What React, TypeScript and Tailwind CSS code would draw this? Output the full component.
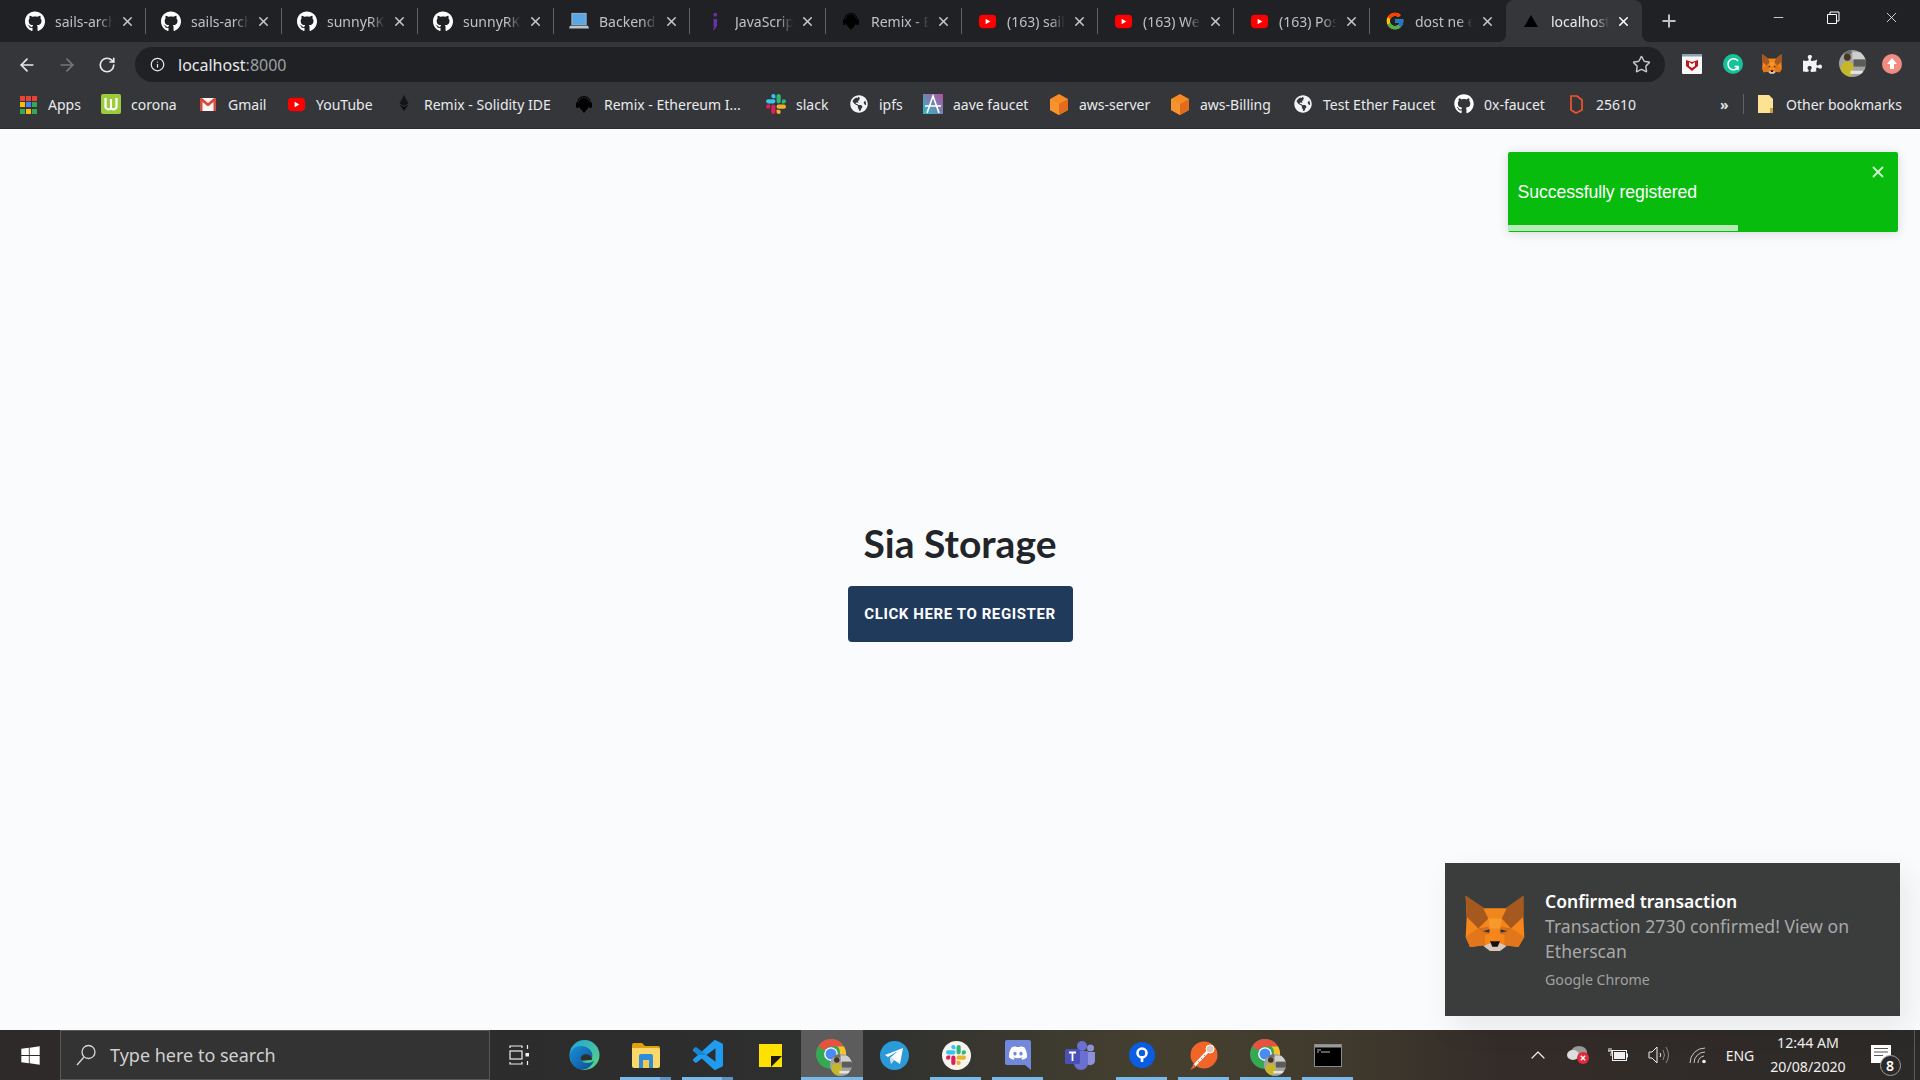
import React from "react";
import { FaGithub, FaGlobeAmericas, FaPuzzlePiece, FaWindows } from "react-icons/fa";
import { FcGoogle } from "react-icons/fc";
import { SiDiscord } from "react-icons/si";
import { ArrowLeft, ArrowRight, RotateCw, Info, Star, X, Plus, Minus, ChevronUp } from "lucide-react";

const Yt = ({ s = 19 }: { s?: number }) => (
  <svg width={s} height={s} viewBox="0 0 20 20"><rect x="1" y="3" width="18" height="14" rx="4" fill="#f00" /><path d="M8 7l5 3-5 3z" fill="#fff" /></svg>
);
const Gh = () => <FaGithub size={21} color="#fff" />;
const Headset = () => (
  <svg width="20" height="20" viewBox="0 0 20 20"><path d="M3 9a7 7 0 0 1 14 0v3h-1V9A6 6 0 0 0 4 9v3H3z" fill="#000" /><ellipse cx="10" cy="10" rx="5.5" ry="6.5" fill="#000" /><rect x="2" y="8" width="3" height="6" rx="1.5" fill="#000" /><rect x="15" y="8" width="3" height="6" rx="1.5" fill="#000" /><path d="M7.5 16h5l-2.5 3z" fill="#000" /></svg>
);
const Laptop = () => (
  <svg width="21" height="20" viewBox="0 0 21 20"><rect x="3" y="2" width="15" height="12" fill="#5aa7e6" stroke="#9db7cc" /><path d="M1 15h19l1 3H0z" fill="#b9c4cc" /></svg>
);
const JsIcon = () => (
  <svg width="20" height="20" viewBox="0 0 20 20"><rect x="8.5" y="2" width="3.5" height="3.5" rx="1" fill="#6b2fa8" /><path d="M8.5 8h3.5v7l-3 4h-1l1-4h-.5z" fill="#6b2fa8" /></svg>
);
const Triangle = () => (
  <svg width="20" height="20" viewBox="0 0 20 20"><path d="M10 4l7 12H3z" fill="#000" /></svg>
);

const tabs = [
  { icon: <Gh />, t: "sails-archive" },
  { icon: <Gh />, t: "sails-archive" },
  { icon: <Gh />, t: "sunnyRK/sia" },
  { icon: <Gh />, t: "sunnyRK/sia" },
  { icon: <Laptop />, t: "Backend dev" },
  { icon: <JsIcon />, t: "JavaScript" },
  { icon: <Headset />, t: "Remix - Ethereum" },
  { icon: <Yt />, t: "(163) sails" },
  { icon: <Yt />, t: "(163) Web" },
  { icon: <Yt />, t: "(163) Post" },
  { icon: <FcGoogle size={20} />, t: "dost ne ethereum" },
];

const Tab = ({ icon, t, active, last }: { icon: React.ReactNode; t: string; active?: boolean; last?: boolean }) => (
  <div className={active ? "relative w-[136px] h-[42px] flex items-center pl-[15px] bg-[#35363a] rounded-t-[8px]" : "relative w-[136px] h-[42px] flex items-center pl-[15px]"}>
    {active && <div className="absolute left-[-8px] bottom-0 w-[8px] h-[8px] bg-[radial-gradient(circle_at_0_0,transparent_8px,#35363a_8px)]" />}
    {active && <div className="absolute right-[-8px] bottom-0 w-[8px] h-[8px] bg-[radial-gradient(circle_at_100%_0,transparent_8px,#35363a_8px)]" />}
    <div className="w-[20px] h-[20px] flex items-center justify-center shrink-0">{icon}</div>
    <div className={active
      ? "ml-[10px] w-[58px] overflow-hidden whitespace-nowrap text-[14px] text-[#e8eaed] [mask-image:linear-gradient(to_right,#000_75%,transparent)]"
      : "ml-[10px] w-[58px] overflow-hidden whitespace-nowrap text-[14px] text-[#bdc1c6] [mask-image:linear-gradient(to_right,#000_75%,transparent)]"}>{t}</div>
    <X size={15} strokeWidth={2.5} className={active ? "ml-[7px] text-white shrink-0" : "ml-[7px] text-[#c4c7ca] shrink-0"} />
    <div className="flex-1" />
    <div className={last || active ? "w-px h-[26px]" : "w-px h-[26px] bg-[#5f6368]"} />
  </div>
);

const AppsIcon = () => {
  const c = ["#ea4335", "#ea4335", "#ea4335", "#fbbc04", "#4285f4", "#34a853", "#34a853", "#fbbc04", "#34a853"];
  return (
    <div className="grid grid-cols-3 gap-[1.5px] w-[17px] h-[17px]">
      {c.map((x, i) => (
        <svg key={i} width="5" height="5"><rect width="5" height="5" fill={x} /></svg>
      ))}
    </div>
  );
};
const Corona = () => (
  <svg width="20" height="20" viewBox="0 0 20 20"><rect width="20" height="20" rx="2" fill="#9ccc3c" /><path d="M4.5 4v9a3 3 0 0 0 5.5 1 3 3 0 0 0 5.5-1V4" fill="none" stroke="#fff" strokeWidth="2.2" /><path d="M10 5v9" stroke="#fff" strokeWidth="2" /></svg>
);
const Gmail = () => (
  <svg width="20" height="20" viewBox="0 0 20 20"><rect x="2" y="4" width="16" height="13" fill="#f5f5f5" /><path d="M2 4v13h2.5V8l5.5 4.5L15.5 8v9H18V4h-2l-6 5-6-5z" fill="#d54c3f" /></svg>
);
const Eth = () => (
  <svg width="20" height="20" viewBox="0 0 20 20"><path d="M10 1L5.500 9.500 10 12l4.500-2.500z" fill="#14151a" /><path d="M5.500 10.500L10 17l4.500-6.500L10 13z" fill="#0d0e12" /></svg>
);
const Globe = () => (
  <div className="w-[18px] h-[18px] rounded-full bg-[#35363a] flex items-center justify-center"><FaGlobeAmericas size={18} color="#f1f3f4" /></div>
);
const Aave = () => (
  <svg width="20" height="20" viewBox="0 0 20 20"><defs><linearGradient id="aave" x1="0" y1="1" x2="1" y2="0"><stop offset="0" stopColor="#2ebac6" /><stop offset="1" stopColor="#b6509e" /></linearGradient></defs><rect width="20" height="20" fill="url(#aave)" /><path d="M4 19L10 2l6 17M2 12h16" stroke="#fff" strokeWidth="1.6" fill="none" /></svg>
);
const Aws = () => (
  <svg width="20" height="21" viewBox="0 0 20 21"><path d="M10 0l9 5v11l-9 5-9-5V5z" fill="#f68a25" /><path d="M10 10l9-5v11l-9 5z" fill="#e26c1e" /><path d="M1 5l9 5v11l-9-5z" fill="#f8942f" /></svg>
);
const Bk25610 = () => (
  <svg width="18" height="20" viewBox="0 0 18 20"><path d="M4 2h6l5 4v10l-6 3-5-3z" fill="none" stroke="#f4522d" strokeWidth="1.7" /></svg>
);
const Folder = () => (
  <svg width="16" height="20" viewBox="0 0 16 20"><path d="M0 1h11l4 4v14H0z" fill="#fde293" /><path d="M12 14h3v5h-3z" fill="#c9a33b" /></svg>
);

function SlackIcon({ s = 22 }: { s?: number }) {
  return (
    <svg width={s} height={s} viewBox="0 0 24 24">
      <path fill="#e01e5a" d="M5.042 15.165a2.528 2.528 0 0 1-2.52 2.523A2.528 2.528 0 0 1 0 15.165a2.527 2.527 0 0 1 2.522-2.52h2.52v2.52zM6.313 15.165a2.527 2.527 0 0 1 2.521-2.52 2.527 2.527 0 0 1 2.521 2.52v6.313A2.528 2.528 0 0 1 8.834 24a2.528 2.528 0 0 1-2.521-2.522v-6.313z" />
      <path fill="#36c5f0" d="M8.834 5.042a2.528 2.528 0 0 1-2.521-2.52A2.528 2.528 0 0 1 8.834 0a2.528 2.528 0 0 1 2.521 2.522v2.52H8.834zM8.834 6.313a2.528 2.528 0 0 1 2.521 2.521 2.528 2.528 0 0 1-2.521 2.521H2.522A2.528 2.528 0 0 1 0 8.834a2.528 2.528 0 0 1 2.522-2.521h6.312z" />
      <path fill="#2eb67d" d="M18.956 8.834a2.528 2.528 0 0 1 2.522-2.521A2.528 2.528 0 0 1 24 8.834a2.528 2.528 0 0 1-2.522 2.521h-2.522V8.834zM17.688 8.834a2.528 2.528 0 0 1-2.523 2.521 2.527 2.527 0 0 1-2.52-2.521V2.522A2.527 2.527 0 0 1 15.165 0a2.528 2.528 0 0 1 2.523 2.522v6.312z" />
      <path fill="#ecb22e" d="M15.165 18.956a2.528 2.528 0 0 1 2.523 2.522A2.528 2.528 0 0 1 15.165 24a2.527 2.527 0 0 1-2.52-2.522v-2.522h2.52zM15.165 17.688a2.527 2.527 0 0 1-2.52-2.523 2.526 2.526 0 0 1 2.52-2.52h6.313A2.527 2.527 0 0 1 24 15.165a2.528 2.528 0 0 1-2.522 2.523h-6.313z" />
    </svg>
  );
}

const bookmarks = [
  { i: <AppsIcon />, t: "Apps", w: "w-[83px]" },
  { i: <Corona />, t: "corona", w: "w-[97px]" },
  { i: <Gmail />, t: "Gmail", w: "w-[88px]" },
  { i: <Yt />, t: "YouTube", w: "w-[108px]" },
  { i: <Eth />, t: "Remix - Solidity IDE", w: "w-[180px]" },
  { i: <Headset />, t: "Remix - Ethereum I...", w: "w-[192px]" },
  { i: <SlackIcon s={20} />, t: "slack", w: "w-[83px]" },
  { i: <Globe />, t: "ipfs", w: "w-[74px]" },
  { i: <Aave />, t: "aave faucet", w: "w-[126px]" },
  { i: <Aws />, t: "aws-server", w: "w-[121px]" },
  { i: <Aws />, t: "aws-Billing", w: "w-[123px]" },
  { i: <Globe />, t: "Test Ether Faucet", w: "w-[161px]" },
  { i: <FaGithub size={20} color="#fff" />, t: "0x-faucet", w: "w-[112px]" },
  { i: <Bk25610 />, t: "25610", w: "w-[80px]" },
];

const Fox = ({ w, h }: { w: number; h: number }) => (
  <svg width={w} height={h} viewBox="30 30 180 170" preserveAspectRatio="none">
    <path d="M32 32l53 38h70l50-38v63l3 60-18 30-40-5-15 15h-30l-15-15-45 5-13-30 3-60z" fill="#f6851b" />
    <path d="M32 32l58 38 10 30-30 30-35-35z" fill="#a5591f" />
    <path d="M205 32l-55 38-10 30 28 30 37-35z" fill="#a5591f" />
    <path d="M85 70h70l-15 30-5 30h-30l-5-30z" fill="#f0871c" />
    <path d="M100 100h40l-5 30h-30z" fill="#f79a2e" />
    <path d="M32 155l36-25 22 18v32l-45 5z" fill="#e2761b" />
    <path d="M208 155l-38-25-22 18v32l42 5z" fill="#e2761b" />
    <path d="M68 130l32-5 5 20-15 3z" fill="#d36d1a" />
    <path d="M170 130l-32-5-5 20 15 3z" fill="#d36d1a" />
    <path d="M85 182l35-14 35 14-20 15h-30z" fill="#d9c6b8" />
    <path d="M105 168h30l-7 16h-16z" fill="#111" />
    <path d="M84 138l20-6-2 10z" fill="#233447" />
    <path d="M156 138l-20-6 2 10z" fill="#233447" />
  </svg>
);

const Avatar = ({ s }: { s: number }) => (
  <svg width={s} height={s} viewBox="0 0 26 26">
    <clipPath id={`av${s}`}><circle cx="13" cy="13" r="13" /></clipPath>
    <g clipPath={`url(#av${s})`}>
      <rect width="26" height="26" fill="#a3a3a1" />
      <rect x="13" y="2" width="13" height="8" fill="#cfcfcd" />
      <rect x="14" y="9" width="12" height="7" fill="#5c5c5a" />
      <rect x="3" y="0" width="9" height="4" fill="#6e6e6c" />
      <circle cx="8" cy="7" r="3.300" fill="#4a3422" />
      <path d="M2 26V16q1-5 6-5t6 5v4l-3 6z" fill="#c6b62c" />
      <rect x="11" y="20" width="12" height="3" fill="#e4e4e2" />
    </g>
  </svg>
);

const Chrome = () => (
  <div className="relative w-[33px] h-[33px]">
    <svg width="30" height="30" viewBox="0 0 24 24">
      <circle cx="12" cy="12" r="12" fill="#34a853" />
      <path d="M12 0a12 12 0 0 1 10.400 6H12a6 6 0 0 0-5.200 3L1.600 6A12 12 0 0 1 12 0z" fill="#e8503f" />
      <path d="M22.400 6A12 12 0 0 1 12 24l5.200-9a6 6 0 0 0 0-9z" fill="#fbc02d" />
      <circle cx="12" cy="12" r="5.500" fill="#fff" />
      <circle cx="12" cy="12" r="4.400" fill="#4a8af4" />
    </svg>
    <div className="absolute right-[-3px] bottom-[-4px]"><Avatar s={22} /></div>
  </div>
);

const Edge = () => (
  <svg width="31" height="32" viewBox="0 0 32 32">
    <defs>
      <linearGradient id="edg" x1="0" y1="0" x2="1" y2="1"><stop offset="0" stopColor="#1fa6dc" /><stop offset="1" stopColor="#5ed67a" /></linearGradient>
      <linearGradient id="edb" x1="0" y1="0" x2="1" y2="1"><stop offset="0" stopColor="#1a8fd8" /><stop offset="1" stopColor="#0c4d96" /></linearGradient>
    </defs>
    <circle cx="16" cy="16" r="15.500" fill="url(#edg)" />
    <path d="M1 17C1 9 9 6 15 7c6 1 10 6 9 11H14c-2 0-3 2-1 4 3 3 9 3 13 0-3 6-7 9-12 9C7 31 1 25 1 17z" fill="url(#edb)" />
    <path d="M12 20c0-4 5-6 9-4 2 1 3 3 3 5l-10 1c-1 0-2-1-2-2z" fill="#2f2f2f" />
  </svg>
);
const Explorer = () => (
  <svg width="28" height="26" viewBox="0 0 28 26"><path d="M0 3q0-2 2-2h8l3 3h13q2 0 2 2v3H0z" fill="#e0a00f" /><path d="M0 6h26q2 0 2 2v16q0 2-2 2H2q-2 0-2-2z" fill="#fbd86a" /><path d="M7 14q0-2 2-2h10q2 0 2 2v12h-4v-8H11v8H7z" fill="#2f8bdc" /><rect x="11" y="18" width="6" height="8" fill="#f5c94a" /></svg>
);
const VSCode = () => (
  <svg width="30" height="30" viewBox="0 0 24 24">
    <path fill="#1f9cf0" d="M23.15 2.587L18.21.21a1.494 1.494 0 0 0-1.705.29l-9.46 8.63-4.12-3.128a.999.999 0 0 0-1.276.057L.327 7.261A1 1 0 0 0 .326 8.74L3.899 12 .326 15.26a1 1 0 0 0 .001 1.479L1.65 17.94a.999.999 0 0 0 1.276.057l4.12-3.128 9.46 8.63a1.492 1.492 0 0 0 1.704.29l4.942-2.377A1.5 1.5 0 0 0 24 20.06V3.939a1.5 1.5 0 0 0-.85-1.352zm-5.146 14.861L10.826 12l7.178-5.448v10.896z" />
    <path fill="#0d7cc6" opacity=".6" d="M.3 7.300L1.650 6.060a1 1 0 0 1 1.280-.060l4.120 3.130L10.800 12l-7 0z" />
  </svg>
);
const Sticky = () => (
  <svg width="23" height="23" viewBox="0 0 23 23"><rect width="23" height="23" fill="#ffe100" /><path d="M12 23L23 12H12z" fill="#1c1a10" /></svg>
);
const Telegram = () => (
  <svg width="29" height="29" viewBox="0 0 29 29"><circle cx="14.500" cy="14.500" r="14.500" fill="#2a9bd8" /><path d="M5 14l18-7-3 16-6-4-3 4-1-6 8-7-10 6z" fill="#fff" /><path d="M10 16l1 6 3-4z" fill="#c8daea" /></svg>
);
const SlackTask = () => (
  <div className="w-[29px] h-[29px] rounded-full bg-[#f7f4ee] flex items-center justify-center"><SlackIcon s={20} /></div>
);
const Discord = () => (
  <svg width="26" height="30" viewBox="0 0 26 30">
    <path d="M2 0h22q2 0 2 2v28l-6-5H2q-2 0-2-2V2q0-2 2-2z" fill="#7289da" />
    <foreignObject x="4" y="4" width="18" height="18"><SiDiscord size={18} color="#fff" /></foreignObject>
  </svg>
);
const Teams = () => (
  <svg width="30" height="30" viewBox="0 0 30 30">
    <circle cx="17" cy="6" r="5" fill="#6a70cf" /><circle cx="25.500" cy="8" r="3.500" fill="#8c91da" />
    <path d="M21 12h9v9a5 5 0 0 1-9 2z" fill="#8c91da" />
    <path d="M9 11h14v12a7 7 0 0 1-14 0z" fill="#6a70cf" />
    <rect x="0" y="9" width="15" height="15" rx="1.500" fill="#4a50b8" />
    <path d="M4 12.500h7M7.500 12.500V21" stroke="#fff" strokeWidth="1.800" />
  </svg>
);
const Pin = () => (
  <svg width="26" height="26" viewBox="0 0 26 26"><circle cx="13" cy="13" r="13" fill="#0a5de0" /><circle cx="13" cy="11" r="4.500" fill="none" stroke="#fff" strokeWidth="2.600" /><rect x="11.700" y="14" width="2.600" height="6" fill="#fff" /></svg>
);
const Postman = () => (
  <svg width="28" height="29" viewBox="0 0 28 29">
    <circle cx="14" cy="14" r="13.500" fill="#f2652a" />
    <path d="M4 25L20 8" stroke="#fff" strokeWidth="2.600" />
    <path d="M8 20l3 3M11 17l3 3M14 14l3 3" stroke="#f2652a" strokeWidth="1" />
    <circle cx="20" cy="8" r="4" fill="#d9c9bf" stroke="#fff" />
    <path d="M0 29l4-6 2 3z" fill="#f2652a" />
  </svg>
);
const Cmd = () => (
  <svg width="28" height="23" viewBox="0 0 28 23"><rect x=".5" y=".5" width="27" height="22" fill="#000" stroke="#8a8a8a" /><rect x="1" y="1" width="26" height="2.500" fill="#9a9a9a" /><path d="M3 6h4M3 8h2M7 8h9" stroke="#bbb" strokeWidth="1" /></svg>
);
const TaskView = () => (
  <svg width="20" height="20" viewBox="0 0 20 20" fill="none" stroke="#f0f0f0" strokeWidth="1.200">
    <path d="M1 3V1h12v2M1 17v2h12v-2" /><rect x="1" y="6" width="12" height="8" /><path d="M18.500 0v4M18.500 16v4" /><rect x="16.500" y="8" width="3.500" height="3.500" fill="#f0f0f0" stroke="none" />
  </svg>
);

const ExtMcafee = () => (
  <svg width="20" height="20" viewBox="0 0 20 20"><rect width="20" height="20" rx="1" fill="#f8f8f8" /><rect width="20" height="2.500" fill="#8ea3b5" /><path d="M4 6l6 2 6-2v6l-6 5-6-5z" fill="#c01818" /><path d="M7 8l3 2 3-2v4l-3 2-3-2z" fill="#f8f8f8" /></svg>
);
const ExtGrammarly = () => (
  <svg width="20" height="20" viewBox="0 0 20 20"><circle cx="10" cy="10" r="10" fill="#15c39a" /><path d="M15 7a5.500 5.500 0 1 0 0 6.500M11.500 12.500h3.500V16" fill="none" stroke="#fff" strokeWidth="1.600" /></svg>
);

const taskApps: { i: React.ReactNode; bar?: boolean; stack?: boolean; active?: boolean }[] = [
  { i: <Edge /> },
  { i: <Explorer />, bar: true, stack: true },
  { i: <VSCode />, bar: true, stack: true },
  { i: <Sticky /> },
  { i: <Chrome />, bar: true, active: true },
  { i: <Telegram /> },
  { i: <SlackTask />, bar: true },
  { i: <Discord />, bar: true },
  { i: <Teams /> },
  { i: <Pin />, bar: true },
  { i: <Postman />, bar: true },
  { i: <Chrome />, bar: true },
  { i: <Cmd />, bar: true },
];

export default function App() {
  return (
    <div className="relative w-[1920px] h-[1080px] overflow-hidden flex flex-col bg-[#fafbfd] font-['Noto_Sans',sans-serif]">
      {/* tab strip */}
      <div className="h-[42px] bg-[#202124] flex items-center shrink-0">
        <div className="flex pl-[10px]">
          {tabs.map((x, i) => <Tab key={i} icon={x.icon} t={x.t} last={i === 10} />)}
          <Tab icon={<Triangle />} t="localhost" active />
        </div>
        <Plus size={20} strokeWidth={2.4} className="ml-[17px] text-[#bdc1c6]" />
        <div className="flex-1" />
        <Minus size={15} strokeWidth={1.2} className="text-white mb-[8px]" />
        <svg width="13" height="13" viewBox="0 0 13 13" fill="none" stroke="#fff" className="ml-[41px] mb-[8px]"><path d="M3 3V1h9v9h-2M.5 3.500h9v9h-9z" /></svg>
        <X size={17} strokeWidth={1.1} className="ml-[43px] mr-[20px] mb-[8px] text-white" />
      </div>
      {/* toolbar */}
      <div className="h-[40px] bg-[#35363a] flex items-start shrink-0 pt-[5px]">
        <ArrowLeft size={20} strokeWidth={2} className="ml-[17px] mt-[8px] text-[#e8eaed]" />
        <ArrowRight size={20} strokeWidth={2} className="ml-[20px] mt-[8px] text-[#75777b]" />
        <RotateCw size={18} strokeWidth={2.2} className="ml-[21px] mt-[9px] text-[#e8eaed]" />
        <div className="ml-[19px] w-[1530px] h-[35px] rounded-full bg-[#202124] flex items-center pl-[15px]">
          <Info size={15} strokeWidth={2} className="text-[#e8eaed]" />
          <span className="ml-[13px] text-[16px] text-[#e8eaed]">localhost<span className="text-[#9aa0a6]">:8000</span></span>
          <div className="flex-1" />
          <Star size={19} strokeWidth={1.8} className="mr-[14px] text-[#c4c7ca]" />
        </div>
        <div className="ml-[17px] mt-[7px]"><ExtMcafee /></div>
        <div className="ml-[21px] mt-[7px]"><ExtGrammarly /></div>
        <div className="ml-[19px] mt-[7px]"><Fox w={20} h={20} /></div>
        <div className="ml-[21px] mt-[7px]"><FaPuzzlePiece size={19} color="#f1f3f4" /></div>
        <div className="ml-[17px] mt-[3px]"><Avatar s={27} /></div>
        <svg width="20" height="20" viewBox="0 0 20 20" className="ml-[16px] mt-[7px]"><circle cx="10" cy="10" r="10" fill="#f28b82" /><path d="M10 4l5 6h-3v5H8v-5H5z" fill="#fff" /></svg>
      </div>
      {/* bookmarks */}
      <div className="h-[47px] bg-[#35363a] border-b border-[#2b2c30] flex items-center pl-[18px] pb-[2px] shrink-0 text-[14px] text-[#e8eaed]">
        {bookmarks.map((b, i) => (
          <div key={i} className={`${b.w} flex items-center shrink-0 whitespace-nowrap`}>
            <div className="w-[20px] h-[20px] flex items-center justify-center shrink-0">{b.i}</div>
            <span className="ml-[10px]">{b.t}</span>
          </div>
        ))}
        <span className="ml-[74px] w-[10px] text-[14px] font-bold text-[#dfe1e5]">»</span>
        <div className="ml-[13px] w-px h-[20px] bg-[#5f6368]" />
        <div className="ml-[14px]"><Folder /></div>
        <span className="ml-[12px] whitespace-nowrap">Other bookmarks</span>
      </div>
      {/* page */}
      <div className="flex-1 flex flex-col items-center justify-center pt-[5px]">
        <h1 className="font-['Lato',sans-serif] font-bold text-[39px] leading-[43px] text-[#212529] mb-[21px]">Sia Storage</h1>
        <button className="w-[225px] h-[56px] rounded-[4px] bg-[#203a5c] text-white font-['Roboto',sans-serif] font-bold text-[15px] tracking-[0.6px]">CLICK HERE TO REGISTER</button>
      </div>
      {/* taskbar */}
      <div className="h-[50px] shrink-0 flex items-stretch bg-[linear-gradient(90deg,#2e2a29_0%,#2d2d2d_35%,#2f3030_45%,#45402f_60%,#3f3a2d_70%,#342c29_78%,#2c2a28_100%)]">
        <div className="w-[60px] flex items-center justify-center"><FaWindows size={21} color="#fff" /></div>
        <div className="w-[430px] bg-[#333333] border border-[#585858] flex items-center pl-[15px]">
          <svg width="20" height="22" viewBox="0 0 20 22" fill="none" stroke="#d8d8d8" strokeWidth="1.300"><circle cx="12.500" cy="8" r="6.500" /><path d="M8 13L1 21" /></svg>
          <span className="ml-[14px] text-[18px] text-[#d0d0d0]">Type here to search</span>
        </div>
        <div className="w-[63px] flex items-center justify-center pr-[5px]"><TaskView /></div>
        {taskApps.map((a, i) => (
          <div key={i} className={a.active ? "relative w-[62px] flex items-center justify-center bg-[#5c5c5c]" : "relative w-[62px] flex items-center justify-center"}>
            {a.i}
            {a.bar && <div className={a.active ? "absolute bottom-0 left-0 right-0 h-[3px] bg-[#76b9ed]" : "absolute bottom-0 left-[5px] right-[6px] h-[3px] bg-[#76b9ed]"} />}
            {a.stack && <div className="absolute bottom-0 right-[6px] w-[11px] h-[3px] bg-[#5c93c4]" />}
          </div>
        ))}
        <div className="flex-1" />
        <div className="w-[40px] flex items-center justify-center"><ChevronUp size={24} strokeWidth={1.2} className="text-[#f0f0f0]" /></div>
        <div className="w-[40px] flex items-center justify-center">
          <svg width="22" height="18" viewBox="0 0 22 18"><ellipse cx="12" cy="6" rx="8" ry="6" fill="#9a9a9a" /><ellipse cx="6" cy="9" rx="6" ry="5" fill="#ddd" /><circle cx="16" cy="12" r="6" fill="#e02b3c" /><path d="M13.800 9.800l4.400 4.400M18.200 9.800l-4.400 4.400" stroke="#fff" strokeWidth="1.400" /></svg>
        </div>
        <div className="w-[40px] flex items-center justify-center">
          <svg width="20" height="14" viewBox="0 0 20 14" fill="none"><rect x="4.500" y="2.500" width="14" height="10" stroke="#f0f0f0" /><rect x="6" y="4" width="11" height="7" fill="#f0f0f0" /><path d="M19 5.500h1v4h-1z" fill="#f0f0f0" /><path d="M3 0v3M1 0v3M0 3h4v2H3v3" stroke="#f0f0f0" /></svg>
        </div>
        <div className="w-[40px] flex items-center justify-center">
          <svg width="21" height="20" viewBox="0 0 21 20" fill="none" stroke="#f0f0f0"><path d="M1 7h3l5-5v16l-5-5H1z" /><path d="M12 8q1.500 2 0 4" /><path d="M15 5q3 5 0 10M18 2q5 8 0 16" stroke="#8a8a8a" /></svg>
        </div>
        <div className="w-[41px] flex items-center justify-center">
          <svg width="20" height="18" viewBox="0 0 20 18" fill="none" stroke="#c8c8c8"><path d="M1 17A15 15 0 0 1 16 2M5 17A11 11 0 0 1 16 6M9 17a7 7 0 0 1 6-7" /><circle cx="15" cy="15.500" r="1.800" fill="#f0f0f0" stroke="none" /></svg>
        </div>
        <div className="w-[42px] flex items-center justify-center text-[14px] text-[#f0f0f0]">ENG</div>
        <div className="w-[94px] flex flex-col items-center justify-center text-[14.2px] leading-[24px] text-[#f0f0f0] whitespace-nowrap">
          <span>12:44 AM</span>
          <span>20/08/2020</span>
        </div>
        <div className="w-[59px] flex items-center justify-center">
          <div className="relative w-[20px] h-[18px] bg-white mr-[8px] mb-[2px]">
            <svg width="14" height="8" viewBox="0 0 14 8" className="mx-auto mt-[3px]"><path d="M0 .5h14M0 4h14M0 7.500h9" stroke="#555" /></svg>
            <div className="absolute left-[9px] top-[10px] w-[21px] h-[21px] rounded-full bg-[#2c2a28] border border-[#a0a0a0] flex items-center justify-center text-[14px] font-semibold text-white leading-none">8</div>
          </div>
        </div>
        <div className="w-[5px] border-l border-[#5a5a5a]" />
        <div className="w-[1px]" />
      </div>

      {/* toast */}
      <div className="absolute left-[1508px] top-[152px] w-[390px] h-[80px] rounded-[2px] bg-[#07bc0c] shadow-[0_1px_10px_rgba(0,0,0,0.1),0_2px_15px_rgba(0,0,0,0.05)] flex items-center pl-[9.500px]">
        <span className="font-['Liberation_Sans',sans-serif] text-[17.7px] text-white tracking-[-0.1px]">Successfully registered</span>
        <X size={18} strokeWidth={2.5} className="absolute right-[11px] top-[11px] text-white opacity-80" />
        <div className="absolute left-0 bottom-[1px] w-[230px] h-[6px] bg-[rgba(255,255,255,0.7)]" />
      </div>

      {/* notification */}
      <div className="absolute left-[1445px] top-[863px] w-[455px] h-[153px] bg-[#3b3c3c] shadow-[8px_12px_30px_rgba(0,0,0,0.08)] flex items-start pl-[20px] pt-[32px]">
        <Fox w={60} h={57} />
        <div className="ml-[20px] -mt-[6px] w-[340px]">
          <div className="text-[17.5px] leading-[25px] font-semibold text-white">Confirmed transaction</div>
          <div className="text-[17.6px] leading-[25px] text-[#a9a9a9]">Transaction 2730 confirmed! View on Etherscan</div>
          <div className="mt-[4px] text-[14.2px] leading-[24px] text-[#a0a0a0]">Google Chrome</div>
        </div>
      </div>
    </div>
  );
}
